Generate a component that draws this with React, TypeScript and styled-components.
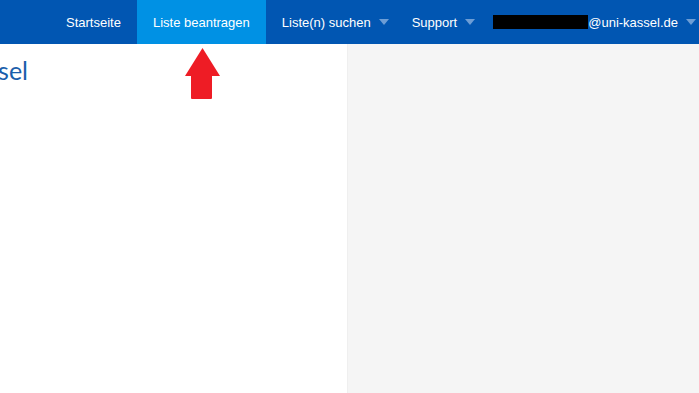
import React from "react";
import styled, { createGlobalStyle } from "styled-components";

const GlobalStyle = createGlobalStyle`
  html, body {
    margin: 0;
    padding: 0;
    overflow: hidden;
  }
  body {
    font-family: "Liberation Sans", Arial, sans-serif;
    background: #ffffff;
  }
`;

const Page = styled.div`
  width: 699px;
  height: 393px;
  display: flex;
  flex-direction: column;
`;

const NavBar = styled.nav`
  height: 44px;
  flex-shrink: 0;
  background: #0156b2;
  display: flex;
  align-items: stretch;
  padding-left: 50px;
`;

const NavItem = styled.a<{ $active?: boolean; $dropdown?: boolean }>`
  display: flex;
  align-items: center;
  padding: ${(p) => (p.$dropdown ? "0 7px 0 16px" : "0 16px")};
  background: ${(p) => (p.$active ? "#0091e4" : "transparent")};
  color: #ffffff;
  font-size: 13px;
  white-space: nowrap;
  cursor: pointer;
`;

const UserItem = styled(NavItem)`
  padding-left: 11px;
`;

const Caret = styled.span`
  width: 0;
  height: 0;
  margin-left: 8px;
  border-left: 5.5px solid transparent;
  border-right: 5.5px solid transparent;
  border-top: 6px solid #6d9dd5;
`;

const Redacted = styled.span`
  display: inline-block;
  width: 95px;
  height: 14px;
  background: #000000;
`;

const Body = styled.div`
  flex: 1;
  display: flex;
`;

const Main = styled.main`
  width: 347px;
  flex-shrink: 0;
  position: relative;
`;

const Aside = styled.aside`
  flex: 1;
  background: #f5f5f5;
  border-left: 1px solid #efefef;
`;

const TitleClip = styled.div`
  width: 28px;
  display: flex;
  justify-content: flex-end;
  padding-top: 11px;
`;

const Title = styled.h1`
  margin: 0;
  white-space: nowrap;
  font-family: Lato, "Open Sans", sans-serif;
  font-weight: 400;
  font-size: 25px;
  line-height: 30px;
  color: #1a5eab;
`;

const Arrow = styled.svg`
  position: absolute;
  left: 184px;
  top: 3px;
`;

export default function App() {
  return (
    <>
      <GlobalStyle />
      <Page>
        <NavBar>
          <NavItem>Startseite</NavItem>
          <NavItem $active>Liste beantragen</NavItem>
          <NavItem $dropdown>
            Liste(n) suchen
            <Caret />
          </NavItem>
          <NavItem $dropdown>
            Support
            <Caret />
          </NavItem>
          <UserItem $dropdown>
            <Redacted />
            @uni-kassel.de
            <Caret />
          </UserItem>
        </NavBar>
        <Body>
          <Main>
            <TitleClip>
              <Title>Universität Kassel</Title>
            </TitleClip>
            <Arrow width="37" height="53" viewBox="0 0 37 53">
              <path
                d="M18.5 1 L36 29 L28 29 L28 51 Q28 52 27 52 L8 52 Q7 52 7 51 L7 29 L1 29 Z"
                fill="#ee1c25"
              />
            </Arrow>
          </Main>
          <Aside />
        </Body>
      </Page>
    </>
  );
}
